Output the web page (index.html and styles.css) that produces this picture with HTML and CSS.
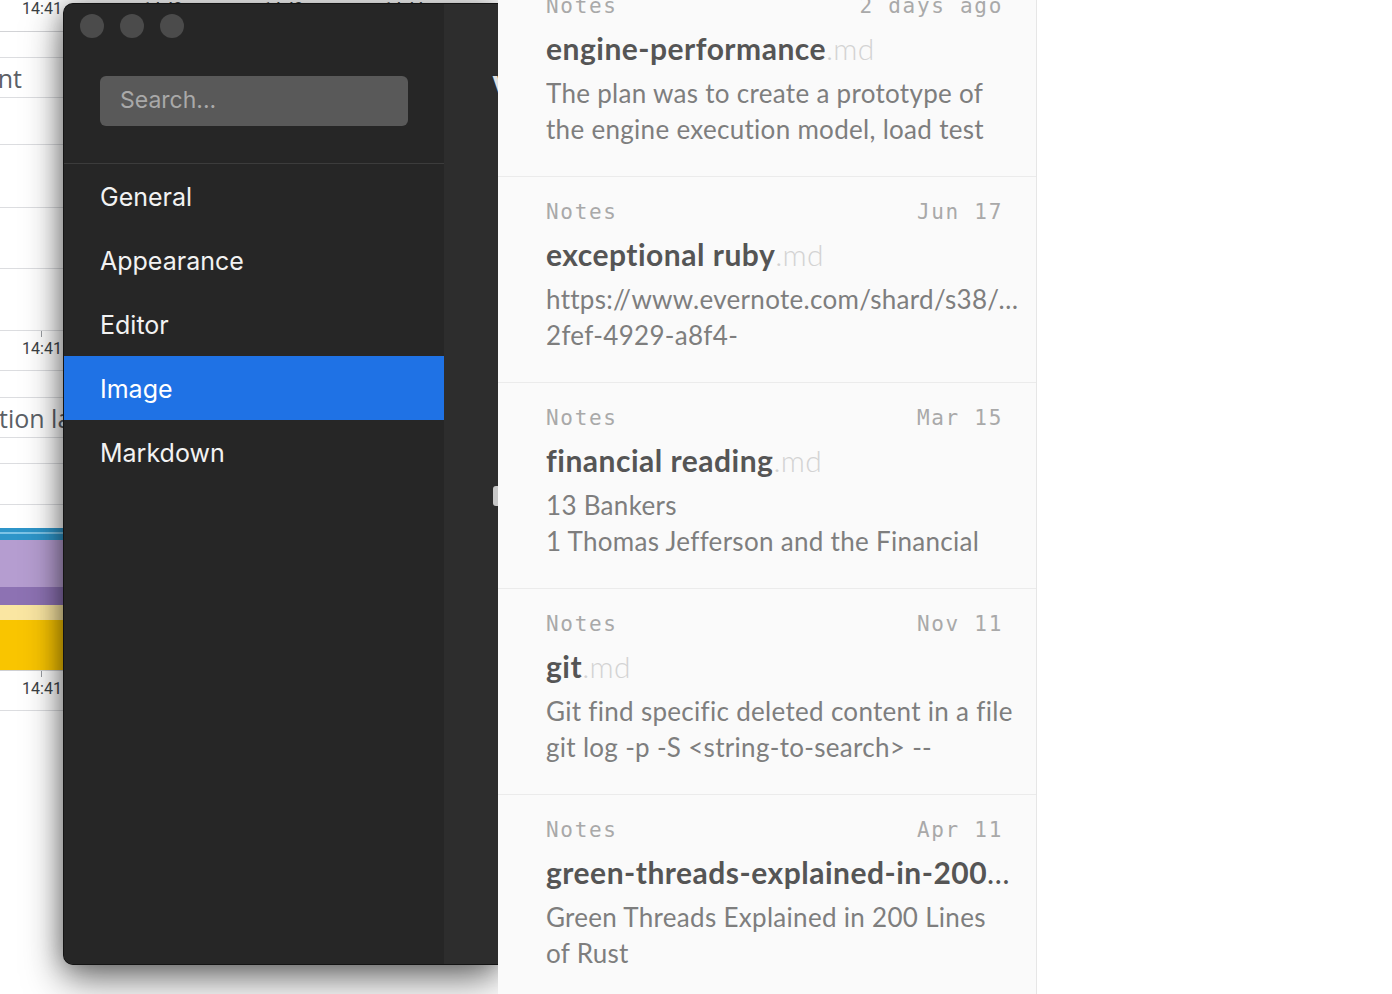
FILE: index.html
```html
<!DOCTYPE html>
<html lang="en">
<head>
<meta charset="utf-8">
<title>Preferences</title>
<link rel="stylesheet" href="styles.css">
</head>
<body>
<div class="desktop">
  <div class="bgapp">
    <div class="chart">
      <div class="row r-top">
        <span class="tlabel first">14:41</span>
        <span class="tlabel">14:42</span>
        <span class="tlabel">14:43</span>
        <span class="tlabel">14:44</span>
      </div>
      <div class="row h25"></div>
      <div class="row h39 label-end"><span class="rowtext">Current</span></div>
      <div class="row h46"></div>
      <div class="row h62"></div>
      <div class="row h60"></div>
      <div class="row h61"></div>
      <div class="row axisrow"><div class="tick"></div><div class="alabel">14:41</div></div>
      <div class="row h26"></div>
      <div class="row h39"><span class="rowtext start">tion latency</span></div>
      <div class="row h25"></div>
      <div class="row h40"></div>
      <div class="band">
        <div class="b-gap"></div>
        <div class="b-blue"><div class="b-stripe"></div></div>
        <div class="b-purple"></div>
        <div class="b-purple2"></div>
        <div class="b-pale"></div>
        <div class="b-yellow"></div>
      </div>
      <div class="row axisrow axis-top"><div class="tick"></div><div class="alabel">14:41</div></div>
    </div>

    <div class="window">
      <aside class="sidebar">
        <div class="lights">
          <span class="light"></span><span class="light"></span><span class="light"></span>
        </div>
        <div class="search-wrap">
          <div class="search">Search...</div>
        </div>
        <nav class="menu">
          <div class="menu-item">General</div>
          <div class="menu-item">Appearance</div>
          <div class="menu-item">Editor</div>
          <div class="menu-item active">Image</div>
          <div class="menu-item">Markdown</div>
        </nav>
      </aside>
      <main class="content">
        <div class="content-title">View</div>
        <div class="checkbox"></div>
      </main>
    </div>
  </div>

  <section class="notes">
    <div class="list">
      <article class="note">
        <div class="meta"><span>Notes</span><span>2 days ago</span></div>
        <div class="title"><b>engine-performance</b><span class="ext">.md</span></div>
        <div class="preview">The plan was to create a prototype of</div>
        <div class="preview">the engine execution model, load test</div>
      </article>
      <article class="note">
        <div class="meta"><span>Notes</span><span>Jun 17</span></div>
        <div class="title"><b>exceptional ruby</b><span class="ext">.md</span></div>
        <div class="preview">https://www.evernote.com/shard/s38/sh/7a1b3c2e-2fef</div>
        <div class="preview">2fef-4929-a8f4-</div>
      </article>
      <article class="note">
        <div class="meta"><span>Notes</span><span>Mar 15</span></div>
        <div class="title"><b>financial reading</b><span class="ext">.md</span></div>
        <div class="preview">13 Bankers</div>
        <div class="preview">1 Thomas Jefferson and the Financial</div>
      </article>
      <article class="note">
        <div class="meta"><span>Notes</span><span>Nov 11</span></div>
        <div class="title"><b>git</b><span class="ext">.md</span></div>
        <div class="preview">Git find specific deleted content in a file</div>
        <div class="preview">git log -p -S &lt;string-to-search&gt; --</div>
      </article>
      <article class="note">
        <div class="meta"><span>Notes</span><span>Apr 11</span></div>
        <div class="title"><b>green-threads-explained-in-200-lines-of-rust</b><span class="ext">.md</span></div>
        <div class="preview">Green Threads Explained in 200 Lines</div>
        <div class="preview">of Rust</div>
      </article>
    </div>
  </section>
</div>
</body>
</html>
```

FILE: styles.css
```css
* { box-sizing: border-box; }
html, body { margin: 0; padding: 0; }
body {
  background: #ffffff;
  width: 1392px;
  height: 994px;
  overflow: hidden;
  font-family: "Inter", "Noto Sans", sans-serif;
}
.desktop {
  display: flex;
  width: 1392px;
  height: 994px;
  overflow: hidden;
}

/* ---------- background app (chart) ---------- */
.bgapp {
  position: relative;
  width: 498px;
  flex: none;
  height: 994px;
  background: #ffffff;
}
.chart {
  width: 498px;
  display: flex;
  flex-direction: column;
  font-family: "Roboto", "Liberation Sans", sans-serif;
  color: #3a3f44;
}
.row {
  border-bottom: 1px solid #dcdde0;
  overflow: hidden;
  display: flex;
  align-items: center;
  white-space: nowrap;
}
.r-top { height: 32px; align-items: flex-start; border-bottom-color: #d2d3d6; }
.tlabel {
  width: 120.6px;
  flex: none;
  text-align: center;
  font-size: 16px;
  line-height: 17px;
}
.tlabel.first { margin-left: -18.3px; }
.h25 { height: 26px; }
.h26 { height: 27px; }
.h39 { height: 40px; }
.h40 { height: 41px; }
.h46 { height: 47px; }
.h60 { height: 61px; }
.h61 { height: 62px; }
.h62 { height: 63px; }
.label-end { justify-content: flex-end; width: 64px; padding-right: 42px; }
.rowtext { font-size: 25px; color: #5b6066; font-family: "Open Sans", sans-serif; }
.rowtext.start { margin-left: -1px; }
.axisrow {
  height: 40px;
  flex-direction: column;
  align-items: flex-start;
}
.axis-top { border-top: 1px solid #cfd0d3; height: 41px; }
.tick { width: 1px; height: 6px; background: #9a9ea3; margin-left: 41px; flex: none; }
.alabel {
  width: 80px;
  margin-left: 2px;
  margin-top: 3px;
  text-align: center;
  font-size: 16px;
  line-height: 17px;
}
.band { height: 165px; display: flex; flex-direction: column; }
.b-gap { height: 23px; }
.b-blue { height: 12px; background: #2e95c9; display: flex; flex-direction: column; justify-content: center; }
.b-stripe { height: 2px; background: #7cc3e6; margin-top: -2px; }
.b-purple { height: 47px; background: #b59dd0; }
.b-purple2 { height: 18px; background: #8d72b3; }
.b-pale { height: 15px; background: #fae6a2; }
.b-yellow { height: 50px; background: #f9c500; }

/* ---------- settings window ---------- */
.window {
  position: absolute;
  left: 63px;
  top: 3px;
  width: 435px;
  height: 962px;
  display: flex;
  background: #262626;
  border: 1px solid #141414;
  border-right: none;
  border-radius: 10px 0 0 10px;
  box-shadow: inset 0 -1px 0 #4a4a4a, 0 14px 38px rgba(0, 0, 0, 0.55), 0 0 22px rgba(0, 0, 0, 0.25);
  overflow: hidden;
}
.sidebar {
  width: 380px;
  flex: none;
  display: flex;
  flex-direction: column;
  background: #262626;
}
.lights {
  display: flex;
  gap: 16px;
  padding: 10px 0 0 16px;
  height: 34px;
  flex: none;
}
.light {
  width: 24px;
  height: 24px;
  border-radius: 50%;
  background: #4b4b4b;
}
.search-wrap {
  padding: 38px 36px 37px 36px;
  border-bottom: 1px solid #3c3c3c;
  flex: none;
}
.search {
  height: 50px;
  border-radius: 6px;
  background: #595959;
  color: #a9a9a9;
  font-size: 23px;
  line-height: 48px;
  padding-left: 20px;
}
.menu { display: flex; flex-direction: column; }
.menu-item {
  height: 64px;
  line-height: 66px;
  padding-left: 36px;
  font-size: 25px;
  color: #f2f2f2;
}
.menu-item.active { background: #1f72e5; color: #ffffff; }
.content {
  flex: 1;
  background: #2d2d2d;
  padding: 66px 0 0 48px;
  display: flex;
  flex-direction: column;
}
.content-title {
  font-size: 28px;
  font-weight: 700;
  line-height: 34px;
  color: #e0e0e0;
  white-space: nowrap;
}
.checkbox {
  width: 20px;
  height: 20px;
  margin-top: 382px;
  margin-left: 1px;
  background: #c8c8c8;
  border-radius: 3px;
}

/* ---------- notes list ---------- */
.notes {
  position: relative;
  z-index: 1;
  width: 539px;
  flex: none;
  height: 994px;
  background: #fafafa;
  border-right: 1px solid #e6e6e6;
  overflow: hidden;
}
.list { margin-top: -29px; }
.note {
  height: 206px;
  padding: 21px 15px 0 48px;
  border-bottom: 1px solid #ebebeb;
}
.meta {
  display: flex;
  justify-content: space-between;
  padding-right: 18px;
  font-family: "DejaVu Sans Mono", "Liberation Mono", monospace;
  font-size: 21px;
  letter-spacing: 1.7px;
  line-height: 28px;
  color: #a9a9a9;
}
.title {
  margin-top: 8px;
  padding-right: 4px;
  font-family: "Lato", "Noto Sans", sans-serif;
  font-size: 30px;
  letter-spacing: 0.5px;
  line-height: 40px;
  color: #555555;
  white-space: nowrap;
  overflow: hidden;
  text-overflow: ellipsis;
}
.title b { font-weight: 700; }
.ext { color: #d3d3d3; font-weight: 300; letter-spacing: 0.3px; }
.preview {
  font-family: "Lato", "Noto Sans", sans-serif;
  font-size: 26px;
  font-weight: 400;
  letter-spacing: 0.3px;
  line-height: 36px;
  color: #7e7e7e;
  white-space: nowrap;
  overflow: hidden;
  text-overflow: ellipsis;
}
.title + .preview { margin-top: 7px; }
```
